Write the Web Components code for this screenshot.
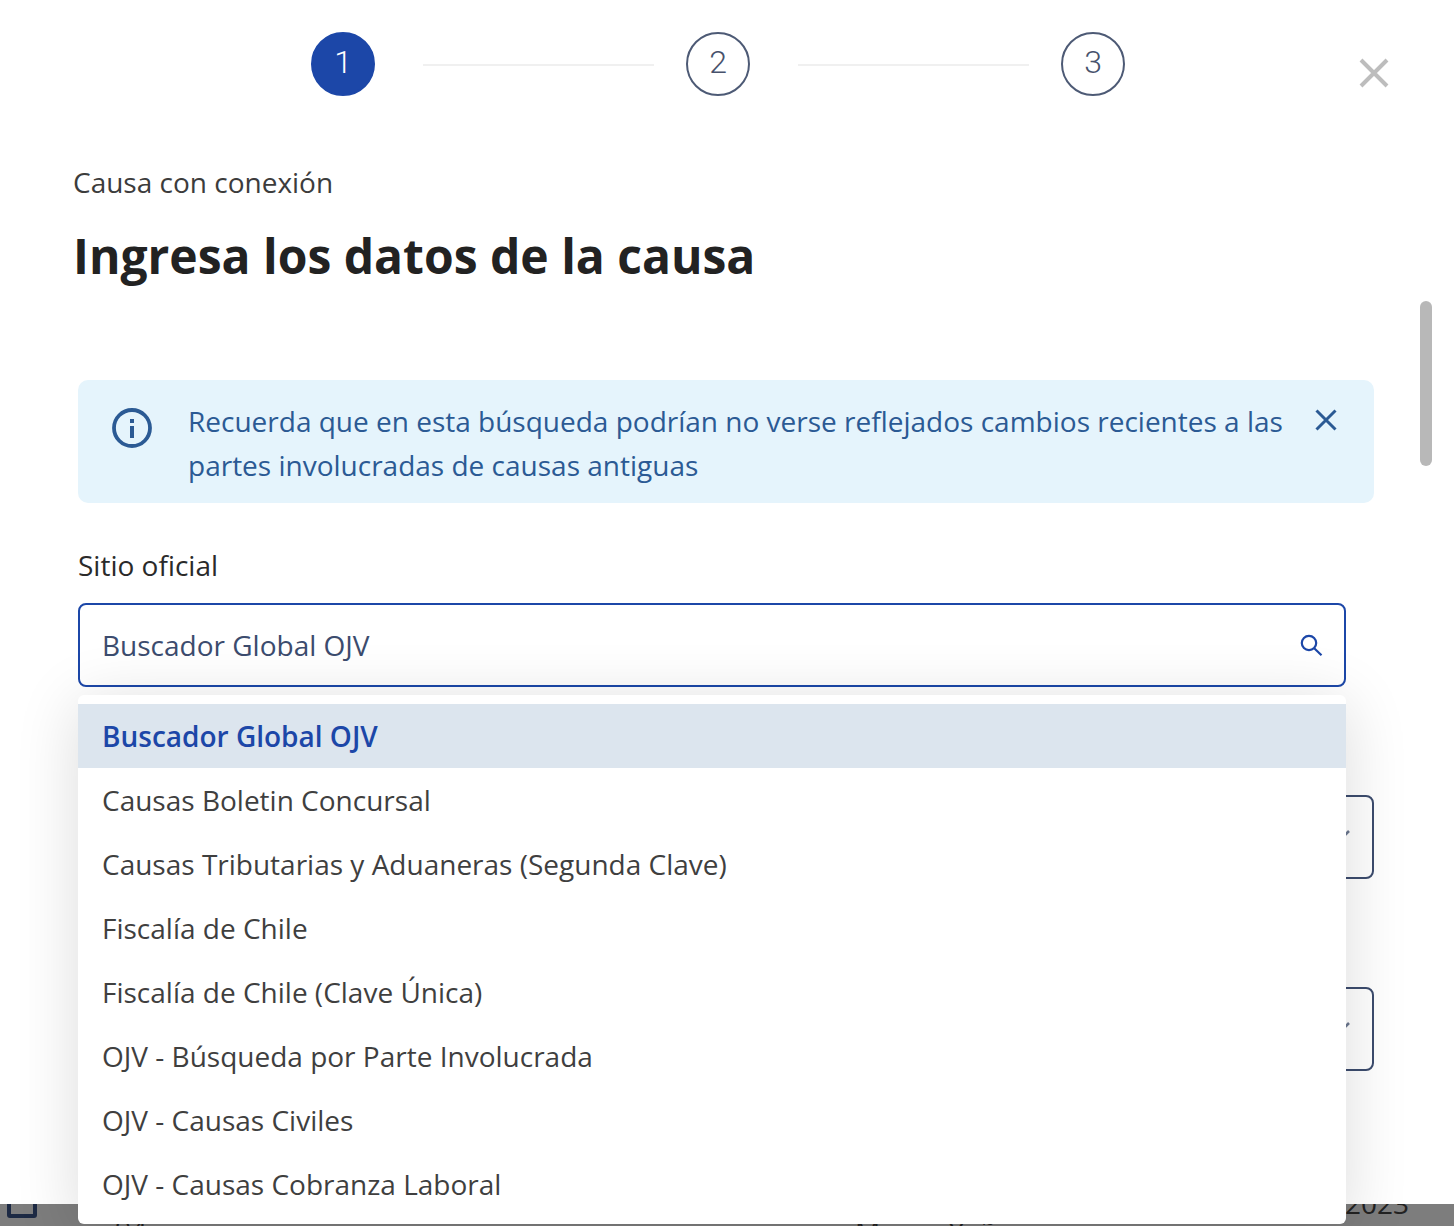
<!DOCTYPE html>
<html lang="es">
<head>
<meta charset="utf-8">
<title>Ingresa los datos de la causa</title>
<style>
html, body { margin: 0; padding: 0; background: #fff; overflow: hidden; }
</style>
</head>
<body>
<cause-page>
  <step-bar slot="steps"></step-bar>
  <cause-heading slot="heading" kicker="Causa con conexión" title="Ingresa los datos de la causa"></cause-heading>
  <info-alert slot="alert">Recuerda que en esta búsqueda podrían no verse reflejados cambios recientes a las partes involucradas de causas antiguas</info-alert>
  <site-select slot="select" label="Sitio oficial" value="Buscador Global OJV">
    <site-option selected>Buscador Global OJV</site-option>
    <site-option>Causas Boletin Concursal</site-option>
    <site-option>Causas Tributarias y Aduaneras (Segunda Clave)</site-option>
    <site-option>Fiscalía de Chile</site-option>
    <site-option>Fiscalía de Chile (Clave Única)</site-option>
    <site-option>OJV - Búsqueda por Parte Involucrada</site-option>
    <site-option>OJV - Causas Civiles</site-option>
    <site-option>OJV - Causas Cobranza Laboral</site-option>
  </site-select>
  <blank-select slot="fields"></blank-select>
  <blank-select slot="fields"></blank-select>
</cause-page>

<script>
const FONT = `"Open Sans", "Liberation Sans", sans-serif`;

customElements.define("cause-page", class extends HTMLElement {
  constructor() {
    super();
    this.attachShadow({ mode: "open" }).innerHTML = `
    <style>
      :host { display: block; width: 1454px; height: 1226px; position: relative; overflow: hidden; font-family: ${FONT}; }
      .modal { height: 1204px; box-sizing: border-box; padding-top: 32px; background: #fff; position: relative; z-index: 2; }
      .body { padding: 0 80px 0 78px; margin-top: 67px; }
      .close { position: absolute; left: 1358px; top: 57px; width: 32px; height: 32px; }
      .thumb { position: absolute; left: 1420px; top: 301px; width: 12px; height: 165px; border-radius: 6px; background: #b8b8b8; }
      .fields { display: flex; flex-direction: column; gap: 108px; margin-top: 108px; }
      .strip { height: 22px; background: #7d7d7d; overflow: hidden; position: relative; color: #222; font-size: 28px; line-height: 38px; }
      .check { position: absolute; left: 7px; top: -8px; width: 30px; height: 22px; box-sizing: border-box; border: 4px solid #1d2a44; border-radius: 3px; }
      .strip span { position: absolute; white-space: nowrap; }
      .num { left: 115px; top: 6px; }
      .who { left: 855px; top: 8px; }
      .year { left: 1345px; bottom: 4px; }
    </style>
    <div class="modal">
      <slot name="steps"></slot>
      <svg class="close" viewBox="0 0 32 32" fill="none" stroke="#bdbdbd" stroke-width="4"><path d="M3 3 29 29M29 3 3 29"/></svg>
      <div class="body">
        <slot name="heading"></slot>
        <slot name="alert"></slot>
        <slot name="select"></slot>
        <div class="fields"><slot name="fields"></slot></div>
      </div>
      <div class="thumb"></div>
    </div>
    <div class="strip">
      <div class="check"></div>
      <span class="num">94</span>
      <span class="who">Mauro Yañez</span>
      <span class="year">2023</span>
    </div>`;
  }
});

customElements.define("step-bar", class extends HTMLElement {
  constructor() {
    super();
    this.attachShadow({ mode: "open" }).innerHTML = `
    <style>
      :host { display: flex; align-items: center; margin-left: 311px; height: 64px; }
      .dot { width: 64px; height: 64px; box-sizing: border-box; border-radius: 50%; display: flex; align-items: center; justify-content: center;
             border: 2px solid #4d5a75; color: #47526c; font: 350 32px/1 Roboto, sans-serif; padding-bottom: 5px; flex: none; }
      .dot.on { background: #1c47a8; border-color: #1c47a8; color: #fff; }
      .line { width: 231px; height: 2px; background: #f0f0f0; margin: 2px 32px 0 48px; flex: none; }
    </style>
    <div class="dot on">1</div><div class="line"></div>
    <div class="dot">2</div><div class="line"></div>
    <div class="dot">3</div>`;
  }
});

customElements.define("cause-heading", class extends HTMLElement {
  constructor() {
    super();
    this.attachShadow({ mode: "open" }).innerHTML = `
    <style>
      :host { display: block; margin-left: -5px; height: 217px; color: #222; }
      .kicker { font-size: 28px; line-height: 38px; color: #3c3c3c; }
      h1 { margin: 23px 0 0; font-size: 48px; line-height: 64px; font-weight: 700; color: #222; }
    </style>
    <div class="kicker"></div>
    <h1></h1>`;
    this.shadowRoot.querySelector(".kicker").textContent = this.getAttribute("kicker");
    this.shadowRoot.querySelector("h1").textContent = this.getAttribute("title");
  }
});

customElements.define("info-alert", class extends HTMLElement {
  constructor() {
    super();
    this.attachShadow({ mode: "open" }).innerHTML = `
    <style>
      :host { display: flex; width: 1296px; height: 123px; box-sizing: border-box; background: #e5f4fc; border-radius: 10px;
              padding: 19px 36px 0 32px; color: #2b5a94; font-size: 28px; line-height: 44px; }
      .info { width: 44px; height: 44px; flex: none; margin-top: 7px; }
      .text { flex: 1; margin-left: 34px; }
      .x { width: 26px; height: 26px; flex: none; margin-top: 8px; margin-left: 26px; transform: translateX(1px); }
    </style>
    <svg class="info" viewBox="0 0 44 44" fill="none">
      <circle cx="22" cy="22" r="18" stroke="#2b5a94" stroke-width="3.8"/>
      <rect x="20" y="20" width="4" height="12" fill="#2b5a94"/>
      <rect x="20" y="13" width="4" height="4" fill="#2b5a94"/>
    </svg>
    <div class="text"><slot></slot></div>
    <svg class="x" viewBox="0 0 26 26" fill="none" stroke="#2b5a94" stroke-width="3"><path d="M3.5 3.5 22.5 22.5M22.5 3.5 3.5 22.5"/></svg>`;
  }
});

customElements.define("site-select", class extends HTMLElement {
  constructor() {
    super();
    this.attachShadow({ mode: "open" }).innerHTML = `
    <style>
      :host { display: block; width: 1268px; position: relative; margin-top: 43px; z-index: 5; }
      .label { font-size: 28px; line-height: 38px; color: #2a2a2a; margin-bottom: 19px; }
      .box { height: 84px; box-sizing: border-box; border: 2px solid #1c47a8; border-radius: 8px; background: #fff; display: flex; align-items: center;
             justify-content: space-between; padding: 0 21px 0 22px; font-size: 28px; color: #3c4c6e; }
      .menu { position: absolute; left: 0; top: 149px; width: 100%; height: 529px; box-sizing: border-box; padding-top: 9px; background: #fff; border-radius: 6px;
              box-shadow: 0 8px 64px rgba(0, 0, 0, .14); overflow: hidden; }
      svg { width: 24px; height: 24px; }
    </style>
    <div class="label"></div>
    <div class="box"><span class="value"></span>
      <svg viewBox="0 0 24 24" fill="none" stroke="#1c47a8" stroke-width="2.2"><circle cx="10" cy="10" r="7.2"/><path d="M15.2 15.2 22.5 22.2"/></svg>
    </div>
    <div class="menu"><slot></slot></div>`;
    this.shadowRoot.querySelector(".label").textContent = this.getAttribute("label");
    this.shadowRoot.querySelector(".value").textContent = this.getAttribute("value");
  }
});

customElements.define("site-option", class extends HTMLElement {
  constructor() {
    super();
    this.attachShadow({ mode: "open" }).innerHTML = `
    <style>
      :host { display: flex; align-items: center; height: 64px; padding-left: 24px; font-size: 28px; color: #3f3f3f; }
      :host([selected]) { background: #dce5ee; color: #1c47a8; font-weight: 600; }
    </style>
    <slot></slot>`;
  }
});

customElements.define("blank-select", class extends HTMLElement {
  constructor() {
    super();
    this.attachShadow({ mode: "open" }).innerHTML = `
    <style>
      :host { display: block; width: 1296px; height: 84px; box-sizing: border-box; border: 2px solid #3c4c6e; border-radius: 8px; background: #fff; position: relative; }
      svg { position: absolute; right: 21px; top: 32px; width: 24px; height: 14px; }
    </style>
    <svg viewBox="0 0 24 14" fill="none" stroke="#6d7890" stroke-width="2.6"><path d="M2 2 12 12 22 2"/></svg>`;
  }
});
</script>
</body>
</html>
